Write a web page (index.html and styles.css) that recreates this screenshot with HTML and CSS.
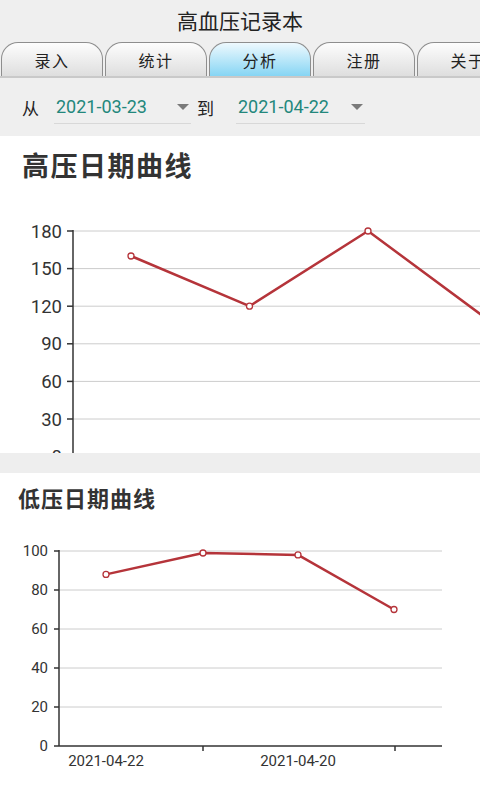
FILE: index.html
```html
<!DOCTYPE html>
<html lang="zh">
<head>
<meta charset="utf-8">
<title>高血压记录本</title>
<link rel="stylesheet" href="styles.css">
</head>
<body>
<div class="app">
  <header class="topbar">高血压记录本</header>
  <nav class="tabs">
    <div class="tab">录入</div>
    <div class="tab">统计</div>
    <div class="tab active">分析</div>
    <div class="tab">注册</div>
    <div class="tab">关于</div>
  </nav>
  <div class="daterow">
    <span class="lbl">从</span>
    <div class="field f1"><span class="date">2021-03-23</span><span class="caret"></span></div>
    <span class="lbl to">到</span>
    <div class="field f2"><span class="date">2021-04-22</span><span class="caret"></span></div>
  </div>

  <section class="chart chart-high">
    <h2 class="ctitle big">高压日期曲线</h2>
    <svg class="plot" width="480" height="271" viewBox="0 0 480 271">
      <g class="grid">
        <line x1="73" y1="49" x2="480" y2="49"/>
        <line x1="73" y1="86.6" x2="480" y2="86.6"/>
        <line x1="73" y1="124.2" x2="480" y2="124.2"/>
        <line x1="73" y1="161.8" x2="480" y2="161.8"/>
        <line x1="73" y1="199.4" x2="480" y2="199.4"/>
        <line x1="73" y1="237" x2="480" y2="237"/>
      </g>
      <g class="axis">
        <line x1="73" y1="48" x2="73" y2="280"/>
        <line x1="67" y1="49" x2="73" y2="49"/>
        <line x1="67" y1="86.6" x2="73" y2="86.6"/>
        <line x1="67" y1="124.2" x2="73" y2="124.2"/>
        <line x1="67" y1="161.8" x2="73" y2="161.8"/>
        <line x1="67" y1="199.4" x2="73" y2="199.4"/>
        <line x1="67" y1="237" x2="73" y2="237"/>
        <line x1="67" y1="274.6" x2="73" y2="274.6"/>
      </g>
      <g class="ylab big">
        <text x="62" y="55.5">180</text>
        <text x="62" y="93.1">150</text>
        <text x="62" y="130.7">120</text>
        <text x="62" y="168.3">90</text>
        <text x="62" y="205.9">60</text>
        <text x="62" y="243.5">30</text>
        <text x="62" y="281.1">0</text>
      </g>
      <polyline class="series" points="131,74 249.5,124.2 368,49 486.5,136.7"/>
      <g class="dots">
        <circle cx="131" cy="74" r="3"/>
        <circle cx="249.5" cy="124.2" r="3"/>
        <circle cx="368" cy="49" r="3"/>
      </g>
    </svg>
  </section>

  <div class="band"></div>

  <section class="chart chart-low">
    <h2 class="ctitle small">低压日期曲线</h2>
    <svg class="plot" width="480" height="289" viewBox="0 0 480 289">
      <g class="grid">
        <line x1="59" y1="40" x2="442" y2="40"/>
        <line x1="59" y1="79" x2="442" y2="79"/>
        <line x1="59" y1="118" x2="442" y2="118"/>
        <line x1="59" y1="157" x2="442" y2="157"/>
        <line x1="59" y1="196" x2="442" y2="196"/>
      </g>
      <g class="axis">
        <line x1="59" y1="39" x2="59" y2="235"/>
        <line x1="59" y1="235" x2="442" y2="235"/>
        <line x1="54" y1="40" x2="59" y2="40"/>
        <line x1="54" y1="79" x2="59" y2="79"/>
        <line x1="54" y1="118" x2="59" y2="118"/>
        <line x1="54" y1="157" x2="59" y2="157"/>
        <line x1="54" y1="196" x2="59" y2="196"/>
        <line x1="54" y1="235" x2="59" y2="235"/>
        <line x1="203" y1="235" x2="203" y2="240"/>
        <line x1="395" y1="235" x2="395" y2="240"/>
      </g>
      <g class="ylab small">
        <text x="48" y="45">100</text>
        <text x="48" y="84">80</text>
        <text x="48" y="123">60</text>
        <text x="48" y="162">40</text>
        <text x="48" y="201">20</text>
        <text x="48" y="240">0</text>
      </g>
      <g class="xlab">
        <text x="106" y="255">2021-04-22</text>
        <text x="298" y="255">2021-04-20</text>
      </g>
      <polyline class="series" points="106,63.4 203,42 298,43.9 394,98.5"/>
      <g class="dots">
        <circle cx="106" cy="63.4" r="3"/>
        <circle cx="203" cy="42" r="3"/>
        <circle cx="298" cy="43.9" r="3"/>
        <circle cx="394" cy="98.5" r="3"/>
      </g>
    </svg>
  </section>
</div>
</body>
</html>
```

FILE: styles.css
```css
* { box-sizing: border-box; }
html, body {
  margin: 0;
  padding: 0;
  background: #efefef;
}
body {
  font-family: "Noto Sans CJK SC", Roboto, sans-serif;
  color: #222;
  width: 480px;
  height: 800px;
  overflow: hidden;
}
.app {
  display: flex;
  flex-direction: column;
  width: 480px;
  height: 800px;
  overflow: hidden;
}
.topbar {
  height: 42px;
  line-height: 40px;
  text-align: center;
  font-size: 21px;
  color: #222;
  background: #efefef;
}
.tabs {
  display: flex;
  gap: 2px;
  padding-left: 1px;
  height: 36px;
  overflow: hidden;
  border-bottom: 2px solid #c9c9c9;
  background: #efefef;
}
.tab {
  flex: 0 0 102px;
  height: 34px;
  border: 1.5px solid #8e8e8e;
  border-bottom: none;
  border-radius: 17px 17px 0 0;
  background: linear-gradient(#fdfdfd, #dedede);
  text-align: center;
  line-height: 34px;
  font-size: 16px;
  letter-spacing: 1.5px;
  color: #222;
}
.tab.active {
  background: linear-gradient(#eef9fe, #86d5f4);
}
.daterow {
  display: flex;
  align-items: flex-start;
  height: 58px;
  padding-left: 22px;
  background: #efefef;
}
.lbl {
  align-self: center;
  font-size: 17px;
  color: #222;
}
.lbl.to { margin-left: 6px; }
.field {
  position: relative;
  display: flex;
  align-items: center;
  height: 34px;
  margin-top: 12px;
  padding-left: 2px;
  border-bottom: 1px solid #d8d8d8;
}
.f1 { width: 137px; margin-left: 15px; }
.f2 { width: 129px; margin-left: 22px; }
.date {
  font-family: Roboto, sans-serif;
  font-size: 18px;
  color: #23877c;
}
.caret {
  position: absolute;
  right: 2px;
  top: 14px;
  width: 0;
  height: 0;
  border-left: 6px solid transparent;
  border-right: 6px solid transparent;
  border-top: 6px solid #7a7a7a;
}
.chart {
  background: #fff;
  overflow: hidden;
  display: flex;
  flex-direction: column;
}
.chart-high { height: 317px; }
.chart-low { flex: 1; }
.band {
  height: 20px;
  background: #eeeeee;
}
.ctitle {
  margin: 0;
  font-weight: 700;
  color: #333;
}
.ctitle.big {
  font-size: 27px;
  letter-spacing: 1.5px;
  line-height: 34px;
  padding: 12px 0 0 22px;
  height: 46px;
}
.ctitle.small {
  font-size: 22px;
  letter-spacing: 1px;
  line-height: 28px;
  padding: 10px 0 0 18px;
  height: 38px;
}
.plot {
  display: block;
  flex: none;
}
.grid line {
  stroke: #cccccc;
  stroke-width: 1;
}
.axis line {
  stroke: #333;
  stroke-width: 1.5;
}
.ylab text {
  font-family: Roboto, sans-serif;
  fill: #333;
  text-anchor: end;
}
.ylab.big text {
  font-size: 18.5px;
}
.ylab.small text {
  font-size: 15px;
}
.xlab text {
  font-family: Roboto, sans-serif;
  font-size: 15px;
  fill: #333;
  text-anchor: middle;
}
.series {
  fill: none;
  stroke: #b5343a;
  stroke-width: 2.5;
  stroke-linejoin: round;
}
.dots circle {
  fill: #fff;
  stroke: #b5343a;
  stroke-width: 1.3;
}
```
